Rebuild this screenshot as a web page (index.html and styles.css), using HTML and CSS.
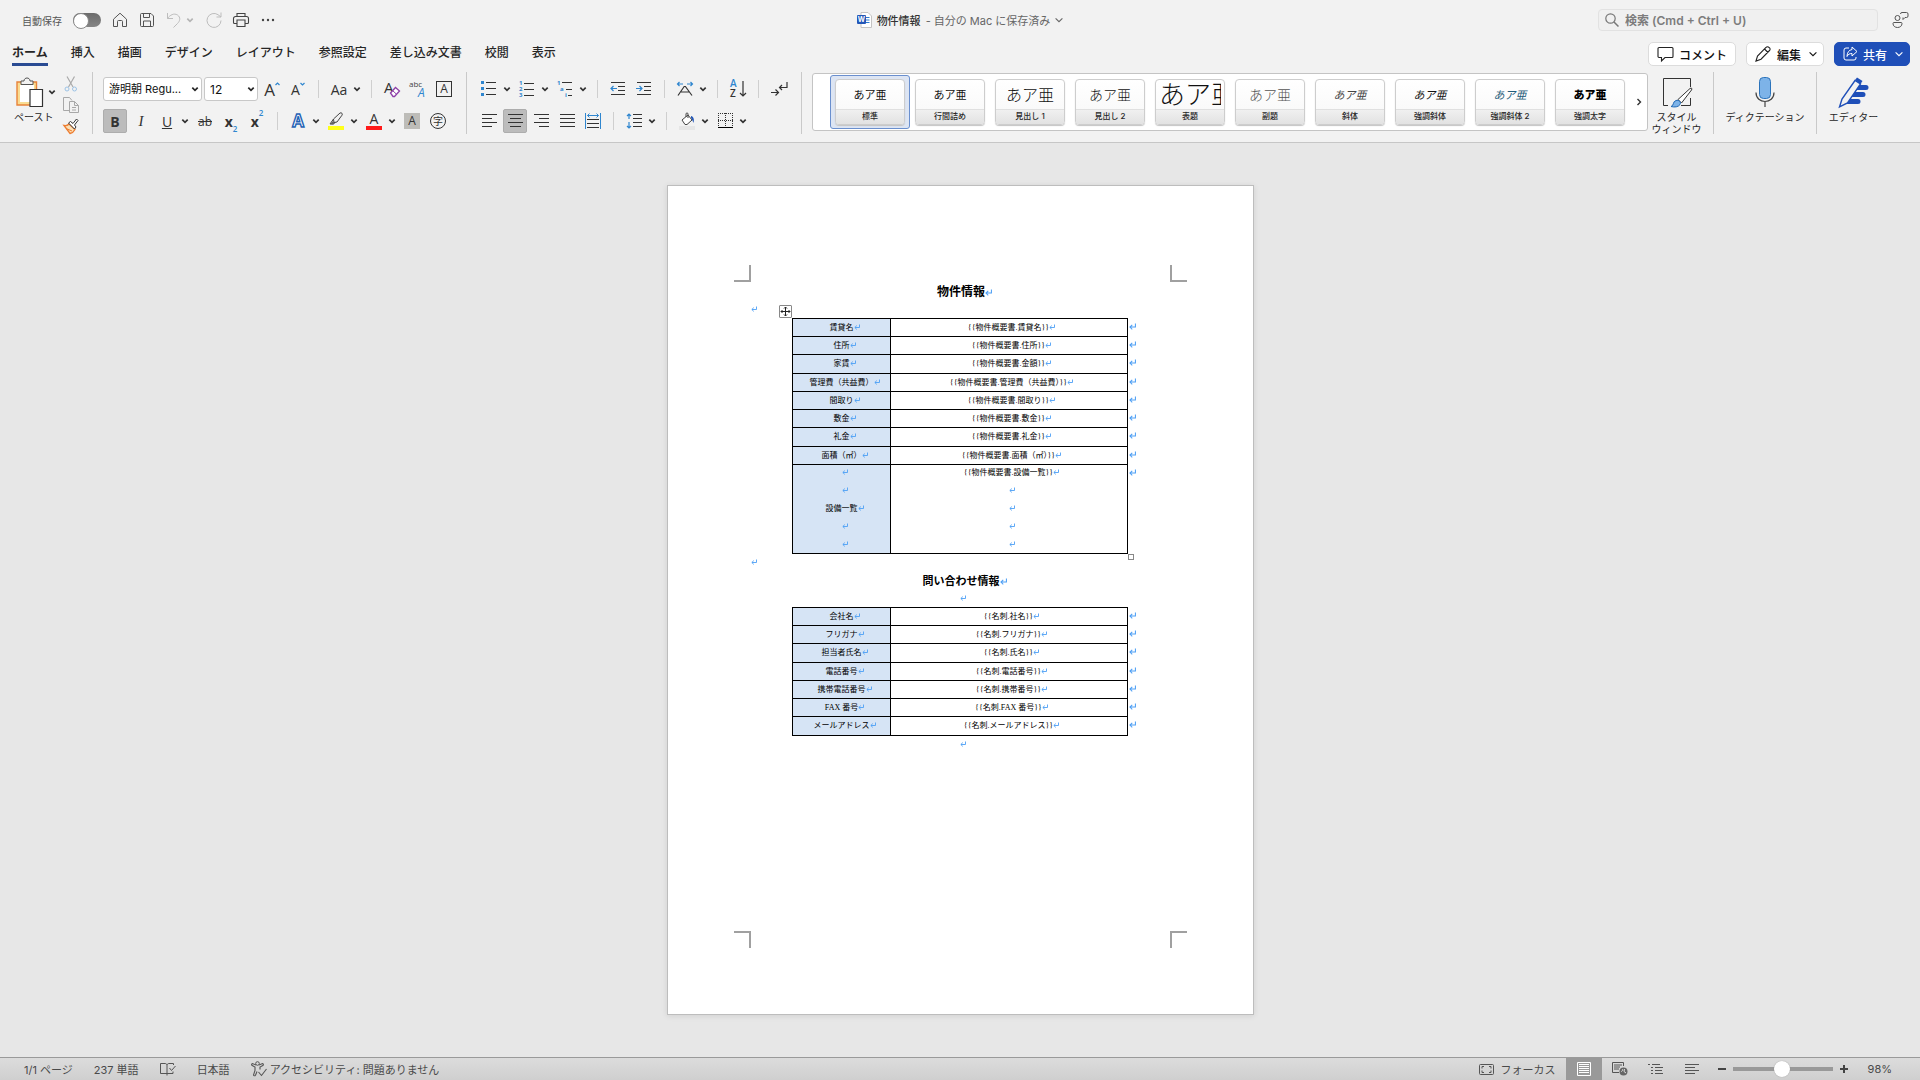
FILE: index.html
```html
<!DOCTYPE html>
<html lang="ja">
<head>
    <meta charset="UTF-8">
    <meta name="viewport" content="width=device-width, initial-scale=1.0">
    <title>物件情報</title>
    <link rel="stylesheet" href="styles.css">
</head>
<body>
    <svg class="defs" aria-hidden="true">
        <symbol id="chev" viewBox="0 0 8 8"><path d="M1.3 2.6 4 5.3 6.7 2.6" fill="none" stroke="currentColor" stroke-width="1.7"/></symbol>
        <symbol id="chev-thin" viewBox="0 0 8 8"><path d="M.6 2.3 4 5.7 7.4 2.3" fill="none" stroke="currentColor" stroke-width="1.1"/></symbol>
        <symbol id="ret" viewBox="0 0 6 6"><path d="M5.5.5v3H1M2.8 1.6.8 3.5l2 1.9" fill="none" stroke="#4d9ff5" stroke-width=".9"/></symbol>
    </svg>

    <header>
        <div class="titlebar">
            <div class="quick">
                <label for="autosave">自動保存</label>
                <input type="checkbox" id="autosave" class="switch">
                <button class="qb" aria-label="ホーム"><svg width="16" height="16" viewBox="0 0 16 16"><path d="M1.500 7.200 8 1.200l6.500 6v7.300h-4V9.500a1 1 0 0 0-1-1h-3a1 1 0 0 0-1 1v5h-4z" fill="none" stroke="#555" stroke-linejoin="round"/></svg></button>
                <button class="qb" aria-label="保存"><svg width="16" height="16" viewBox="0 0 16 16"><path d="M1.500 2.500a1 1 0 0 1 1-1h9.500l2.500 2.500v9.500a1 1 0 0 1-1 1h-11a1 1 0 0 1-1-1zM4.500 1.500v4h6v-4M4.500 14.500v-5.500h7v5.500" fill="none" stroke="#555"/></svg></button>
                <div class="split">
                    <button class="qb" aria-label="元に戻す"><svg width="16" height="16" viewBox="0 0 16 16"><path d="M1.500 1v5.500H7M1.500 6.500C4 3 8 .8 11.500 3c3.500 2.500 2.500 6 0 8.500l-4 4" fill="none" stroke="#bdbdbd"/></svg></button>
                    <button class="drop pale" aria-label="元に戻す履歴"><svg width="8" height="8"><use href="#chev"/></svg></button>
                </div>
                <button class="qb" aria-label="やり直し"><svg width="16" height="16" viewBox="0 0 16 16"><path d="M15 8.500A7 7 0 1 1 12 2.700L15 5M15 .5V5h-4.500" fill="none" stroke="#bdbdbd"/></svg></button>
                <button class="qb" aria-label="印刷"><svg width="16" height="16" viewBox="0 0 16 16"><path d="M4 4.500v-3h8v3M4 11.500H1.500a1 1 0 0 1-1-1v-4a2 2 0 0 1 2-2h11a2 2 0 0 1 2 2v4a1 1 0 0 1-1 1H12M4 8h8v6.500H4z" fill="none" stroke="#444" stroke-width="1.100"/></svg></button>
                <button class="qb" aria-label="その他"><svg width="14" height="4" viewBox="0 0 14 4" fill="#444"><circle cx="2" cy="2" r="1.200"/><circle cx="7" cy="2" r="1.200"/><circle cx="12" cy="2" r="1.200"/></svg></button>
            </div>
            <div class="doc-title">
                <svg width="15" height="16" viewBox="0 0 15 16"><path d="M4 .5h7l3.500 3.500v11.500H4z" fill="#fff" stroke="#c4c4c4"/><path d="M9 5.500h3.500M9 8h3.500M9 10.500h3.500" stroke="#2b7cd3"/><rect y="3" width="9" height="9" rx="1" fill="#2357b8"/><text x="4.500" y="10" class="word-w">W</text></svg>
                <b>物件情報</b><span>- 自分の Mac に保存済み</span>
                <svg width="8" height="8"><use href="#chev-thin"/></svg>
            </div>
            <div class="search-area">
                <label class="search">
                    <svg width="14" height="14" viewBox="0 0 14 14"><circle cx="5.500" cy="5.500" r="4.700" fill="none" stroke="#777" stroke-width="1.200"/><path d="m9 9 4.500 4.500" stroke="#777" stroke-width="1.500"/></svg>
                    <input type="text" placeholder="検索 (Cmd + Ctrl + U)" aria-label="検索">
                </label>
                <button class="qb" aria-label="共同作業"><svg width="18" height="18" viewBox="0 0 18 18" fill="none" stroke="#555"><path d="M9.500 3a1.500 1.500 0 0 1 1.500-1.500h4.500A1.500 1.500 0 0 1 17 3v2a1.500 1.500 0 0 1-1.500 1.500H14L12 8.500v-2"/><circle cx="6.500" cy="7" r="2.500"/><path d="M2 12.500a1 1 0 0 1 1-1h7a1 1 0 0 1 1 1c0 2.500-2 4-4.500 4S2 15 2 12.500z"/></svg></button>
            </div>
        </div>

        <div class="tabbar">
            <nav>
                <a href="#" class="active">ホーム</a>
                <a href="#">挿入</a>
                <a href="#">描画</a>
                <a href="#">デザイン</a>
                <a href="#">レイアウト</a>
                <a href="#">参照設定</a>
                <a href="#">差し込み文書</a>
                <a href="#">校閲</a>
                <a href="#">表示</a>
            </nav>
            <div class="actions">
                <button class="pill"><svg width="17" height="16" viewBox="0 0 17 16"><path d="M2 1.500h13a1 1 0 0 1 1 1v8a1 1 0 0 1-1 1H8L4.500 15v-3.500H2a1 1 0 0 1-1-1v-8a1 1 0 0 1 1-1z" fill="none" stroke="#222" stroke-width="1.100"/></svg>コメント</button>
                <button class="pill"><svg width="17" height="16" viewBox="0 0 17 16"><path d="m1 15 1.500-5L11 1.500a1.800 1.800 0 0 1 3 0 1.800 1.800 0 0 1 .5 3L6 13.200zM9.500 3l3.500 3.500" fill="none" stroke="#222" stroke-width="1.100"/></svg>編集<svg class="end" width="8" height="8"><use href="#chev-thin"/></svg></button>
                <button class="pill share"><svg width="15" height="16" viewBox="0 0 15 16"><path d="M6 2H3a2 2 0 0 0-2 2v8a2 2 0 0 0 2 2h8a2 2 0 0 0 2-2v-1M9 1l5 4.500L9 10V7.500c-2.500 0-4 .8-5 3 0-4 2-6.500 5-7z" fill="none" stroke="#fff"/></svg>共有<svg class="end" width="8" height="8"><use href="#chev-thin"/></svg></button>
            </div>
        </div>

        <div class="ribbon">
            <div class="group clipboard">
                <div class="paste">
                    <div class="paste-top">
                        <button class="ib" aria-label="貼り付け"><svg width="28" height="31" viewBox="0 0 28 31"><path d="M1 5h19.500v23H1z" fill="#f9dc92" stroke="#e8833a" stroke-width="1.400"/><path d="M4 8h14v17H4z" fill="#fff"/><path d="M5 7.500V4h3c0-4 6-4 6 0h3v3.500z" fill="#f2f2f2" stroke="#555"/><path d="M14 12.500h12.500v17H14z" fill="#fff" stroke="#333" stroke-width="1.200"/></svg></button>
                        <button class="drop" aria-label="貼り付けオプション"><svg width="8" height="8"><use href="#chev"/></svg></button>
                    </div>
                    <span>ペースト</span>
                </div>
                <div class="clip-tools">
                    <button class="ib" aria-label="切り取り"><svg width="16" height="16" viewBox="0 0 16 16" fill="none"><path d="m4 .5 6 10.500M11.500.5l-6 10.500" stroke="#aaa" stroke-width="1.200"/><circle cx="4" cy="13" r="2" stroke="#9cc3e6"/><circle cx="11.500" cy="13" r="2" stroke="#9cc3e6"/></svg></button>
                    <button class="ib" aria-label="コピー"><svg width="16" height="16" viewBox="0 0 16 16" fill="#f2f2f2" stroke="#a8a8a8"><path d="M7 13.500H.5V.5h6l2.500 3"/><path d="M6.500 4.500h5l4 4v7h-9zM11.500 4.500v4h4M9 10.500h4M9 13h4"/></svg></button>
                    <button class="ib" aria-label="書式のコピー"><svg width="16" height="16" viewBox="0 0 16 16" fill="none"><path d="M1 7.500c2 .5 3.500 0 5-1.500l6 5.500c-1 2-3 3.500-5 4z" fill="#fbe0b5" stroke="#ed7d31" stroke-width="1.300"/><path d="M3 10.500 9 13" stroke="#ed7d31"/><path d="m5.500 5 2-1.500L10 5.500l3.500-4.500L15 2.500 11.500 7l1.500 2-1.500 2z" fill="#fff" stroke="#333"/></svg></button>
                </div>
            </div>

            <div class="group font">
                <div class="row">
                    <label class="combo name"><select aria-label="フォント"><option>游明朝 Regu...</option></select><svg width="8" height="8"><use href="#chev"/></svg></label>
                    <label class="combo size"><select aria-label="フォント サイズ"><option>12</option></select><svg width="8" height="8"><use href="#chev"/></svg></label>
                    <button class="ib" aria-label="フォント サイズの拡大"><span class="big">A</span><svg class="caret" width="5" height="4" viewBox="0 0 5 4"><path d="m.5 3 2-2 2 2" fill="none" stroke="#2f86cf" stroke-width="1.200"/></svg></button>
                    <button class="ib" aria-label="フォント サイズの縮小"><span class="mid">A</span><svg class="caret" width="5" height="4" viewBox="0 0 5 4"><path d="m.5 1 2 2 2-2" fill="none" stroke="#2f86cf" stroke-width="1.200"/></svg></button>
                    <i class="sep"></i>
                    <button class="ib" aria-label="文字種の変換"><span class="mid">Aa</span></button>
                    <button class="drop" aria-label="文字種の選択"><svg width="8" height="8"><use href="#chev"/></svg></button>
                    <i class="sep"></i>
                    <button class="ib" aria-label="書式のクリア"><svg width="17" height="18" viewBox="0 0 17 18"><text x="0" y="13" class="ic-a">A</text><path d="m6.500 13 5-5.500 4 3.500-5 5.500h-1.500z" fill="#fff" stroke="#8e3fa8" stroke-width="1.300"/><path d="m8.500 10.500 4 3.700" stroke="#8e3fa8"/></svg></button>
                    <button class="ib" aria-label="ルビ"><svg width="18" height="18" viewBox="0 0 18 18"><text x="0" y="7" class="ic-abc">abc</text><text x="9" y="17" class="ic-ruby">A</text></svg></button>
                    <button class="ib" aria-label="囲み線"><span class="boxed">A</span></button>
                </div>
                <div class="row">
                    <button class="ib on" aria-label="太字"><b>B</b></button>
                    <button class="ib" aria-label="斜体"><em>I</em></button>
                    <button class="ib" aria-label="下線"><u>U</u></button>
                    <button class="drop" aria-label="下線の種類"><svg width="8" height="8"><use href="#chev"/></svg></button>
                    <button class="ib" aria-label="取り消し線"><s>ab</s></button>
                    <button class="ib script" aria-label="下付き"><b>x</b><sub>2</sub></button>
                    <button class="ib script" aria-label="上付き"><b>x</b><sup>2</sup></button>
                    <i class="sep"></i>
                    <button class="ib" aria-label="文字の効果"><svg width="18" height="18" viewBox="0 0 18 18"><text x="9" y="15" class="ic-effect">A</text></svg></button>
                    <button class="drop" aria-label="文字の効果の選択"><svg width="8" height="8"><use href="#chev"/></svg></button>
                    <button class="ib" aria-label="蛍光ペン"><svg width="16" height="18" viewBox="0 0 16 18"><path d="M0 14h16v4H0z" fill="#ffff1a"/><path d="m5.500 7 6.500-6c1.500-.8 3 .8 2 2.200L9 10l-3 .5zM5.500 7 2 12h3.500l1.500-1.500" fill="none" stroke="#444"/><path d="m2 12 3-3 1.500 2-1 1.500z" fill="#666"/></svg></button>
                    <button class="drop" aria-label="蛍光ペンの色"><svg width="8" height="8"><use href="#chev"/></svg></button>
                    <button class="ib" aria-label="フォントの色"><svg width="16" height="18" viewBox="0 0 16 18"><path d="M0 14h16v4H0z" fill="#ff1a1a"/><text x="8" y="12" class="ic-color">A</text></svg></button>
                    <button class="drop" aria-label="フォントの色の選択"><svg width="8" height="8"><use href="#chev"/></svg></button>
                    <button class="ib" aria-label="文字の網かけ"><span class="shaded">A</span></button>
                    <button class="ib" aria-label="囲い文字"><span class="circled">字</span></button>
                </div>
            </div>

            <div class="group para">
                <div class="row">
                    <button class="ib" aria-label="箇条書き"><svg width="16" height="16" viewBox="0 0 16 16"><path d="M0 0h3v3H0zM0 6h3v3H0zM0 12h3v3H0z" fill="#2f86cf"/><path d="M5 1.500h10M5 7.500h10M5 13.500h10" stroke="#333"/></svg></button>
                    <button class="drop" aria-label="行頭文字"><svg width="8" height="8"><use href="#chev"/></svg></button>
                    <button class="ib" aria-label="段落番号"><svg width="16" height="16" viewBox="0 0 16 16"><g class="ic-num"><text x="0" y="4">1</text><text x="0" y="10">2</text><text x="0" y="16">3</text></g><path d="M5 2.500h10M5 8.500h10M5 14.500h10" stroke="#333"/></svg></button>
                    <button class="drop" aria-label="番号の形式"><svg width="8" height="8"><use href="#chev"/></svg></button>
                    <button class="ib" aria-label="アウトライン"><svg width="16" height="16" viewBox="0 0 16 16"><g class="ic-num"><text x="0" y="4">1</text><text x="3" y="10">a</text><text x="8" y="16">i</text></g><path d="M5 1.500h10M9 8.500h6M11 14.500h4" stroke="#333"/></svg></button>
                    <button class="drop" aria-label="リストの種類"><svg width="8" height="8"><use href="#chev"/></svg></button>
                    <i class="sep"></i>
                    <button class="ib" aria-label="インデントを減らす"><svg width="16" height="14" viewBox="0 0 16 14"><path d="M1 .5h14M8 4.500h7M8 8.500h7M1 12.500h14" stroke="#333"/><path d="M7 6.500H1M3.500 4 1 6.500 3.500 9" fill="none" stroke="#2f86cf" stroke-width="1.200"/></svg></button>
                    <button class="ib" aria-label="インデントを増やす"><svg width="16" height="14" viewBox="0 0 16 14"><path d="M1 .5h14M8 4.500h7M8 8.500h7M1 12.500h14" stroke="#333"/><path d="M0 6.500h6M3.500 4 6 6.500 3.500 9" fill="none" stroke="#2f86cf" stroke-width="1.200"/></svg></button>
                    <i class="sep"></i>
                    <button class="ib" aria-label="拡張書式"><svg width="16" height="16" viewBox="0 0 16 16" fill="none"><path d="M.5 3H6M2.500 1 .5 3l2 2M15.500 3H10M13.500 1l2 2-2 2" stroke="#2f86cf" stroke-width="1.200"/><path d="m1 14.500 6.200-9h1.200l6.600 9M4 11h8" stroke="#333" stroke-width="1.200"/></svg></button>
                    <button class="drop" aria-label="拡張書式の選択"><svg width="8" height="8"><use href="#chev"/></svg></button>
                    <i class="sep"></i>
                    <button class="ib" aria-label="並べ替え"><svg width="17" height="18" viewBox="0 0 17 18"><text x="0" y="7" class="ic-sort blue">A</text><text x="0" y="17" class="ic-sort">Z</text><path d="M13 1v15M10 13l3 3 3-3" fill="none" stroke="#333" stroke-width="1.200"/></svg></button>
                    <i class="sep"></i>
                    <button class="ib" aria-label="編集記号の表示"><svg width="17" height="16" viewBox="0 0 17 16"><path d="M16 1v5.500H8.500M11 4 8.500 6.500 11 9M0 11.500h7.500M4.500 8.500l3 3-3 3" fill="none" stroke="#333" stroke-width="1.200"/></svg></button>
                </div>
                <div class="row">
                    <button class="ib" aria-label="左揃え"><svg width="15" height="14" viewBox="0 0 15 14"><path d="M0 .5h15M0 4.500h10M0 8.500h15M0 12.500h10" stroke="#333"/></svg></button>
                    <button class="ib on" aria-label="中央揃え"><svg width="15" height="14" viewBox="0 0 15 14"><path d="M0 .5h15M2 4.500h11M0 8.500h15M2 12.500h11" stroke="#333"/></svg></button>
                    <button class="ib" aria-label="右揃え"><svg width="15" height="14" viewBox="0 0 15 14"><path d="M0 .5h15M5 4.500h10M0 8.500h15M5 12.500h10" stroke="#333"/></svg></button>
                    <button class="ib" aria-label="両端揃え"><svg width="15" height="14" viewBox="0 0 15 14"><path d="M0 .5h15M0 4.500h15M0 8.500h15M0 12.500h15" stroke="#333"/></svg></button>
                    <button class="ib" aria-label="均等割り付け"><svg width="16" height="16" viewBox="0 0 16 16" fill="none"><path d="M.5 0v16M15.500 0v16" stroke="#2f86cf"/><path d="M2.500 2.500h11M4.500.5l-2 2 2 2M11.500.5l2 2-2 2" stroke="#2f86cf"/><path d="M2 6.500h12M2 10.500h12M2 14.500h12" stroke="#333"/></svg></button>
                    <i class="sep"></i>
                    <button class="ib" aria-label="行間"><svg width="17" height="16" viewBox="0 0 17 16"><path d="M3 1v5M1 3l2-2 2 2M3 9v6M1 13l2 2 2-2" fill="none" stroke="#2f86cf" stroke-width="1.200"/><path d="M7 1.500h9M7 5.500h9M7 9.500h9M7 13.500h9" stroke="#333"/></svg></button>
                    <button class="drop" aria-label="行間の選択"><svg width="8" height="8"><use href="#chev"/></svg></button>
                    <i class="sep"></i>
                    <button class="ib" aria-label="塗りつぶし"><svg width="16" height="18" viewBox="0 0 16 18"><path d="M0 14h16v4H0z" fill="#e6e6e6"/><path d="m3 8 6-5 4 5-5 4.500H6zM9 6V2c0-1.500-2-1.500-2 0v3" fill="#fff" stroke="#444"/><path d="M12 4c2.500.5 3.500 3 2.500 7-.8-2-1.500-4-2.500-5z" fill="#2357b8"/></svg></button>
                    <button class="drop" aria-label="塗りつぶしの色"><svg width="8" height="8"><use href="#chev"/></svg></button>
                    <button class="ib" aria-label="罫線"><svg width="15" height="16" viewBox="0 0 15 16"><path d="M0 .5h15M0 7.500h15M.5 0v14M7.500 0v14M14.500 0v14" stroke="#333" stroke-dasharray="1 1"/><path d="M0 14.500h15" stroke="#000"/></svg></button>
                    <button class="drop" aria-label="罫線の種類"><svg width="8" height="8"><use href="#chev"/></svg></button>
                </div>
            </div>

            <div class="styles">
                <button class="style selected"><span class="card"><span class="sample">あア亜</span><span class="cap">標準</span></span></button>
                <button class="style"><span class="card"><span class="sample">あア亜</span><span class="cap">行間詰め</span></span></button>
                <button class="style"><span class="card"><span class="sample h1s">あア亜</span><span class="cap">見出し 1</span></span></button>
                <button class="style"><span class="card"><span class="sample h2s">あア亜</span><span class="cap">見出し 2</span></span></button>
                <button class="style"><span class="card"><span class="sample title">あア亜</span><span class="cap">表題</span></span></button>
                <button class="style"><span class="card"><span class="sample subtitle">あア亜</span><span class="cap">副題</span></span></button>
                <button class="style"><span class="card"><span class="sample italic soft">あア亜</span><span class="cap">斜体</span></span></button>
                <button class="style"><span class="card"><span class="sample italic">あア亜</span><span class="cap">強調斜体</span></span></button>
                <button class="style"><span class="card"><span class="sample italic teal">あア亜</span><span class="cap">強調斜体 2</span></span></button>
                <button class="style"><span class="card"><span class="sample bold">あア亜</span><span class="cap">強調太字</span></span></button>
                <button class="more" aria-label="次のスタイル"><svg width="6" height="8" viewBox="0 0 6 8"><path d="m1.500 1 3 3-3 3" fill="none" stroke="#333" stroke-width="1.400"/></svg></button>
            </div>

            <button class="large pane"><svg width="30" height="31" viewBox="0 0 30 31"><path d="M6 28.500H1.500v-27h27V10M28.500 21v7.500H19" fill="none" stroke="#333"/><path d="M16 22.500 28 11.500c1.500-1 2.500 0 1.500 1.500L19.500 26z" fill="#fff" stroke="#333"/><path d="M9 29.500c3-.5 1.500-5 5-6 3-.8 5.500 1.500 4 4s-5.500 3-9 2z" fill="#7db3e8" stroke="#1f68b4"/></svg><span>スタイル<br>ウィンドウ</span></button>
            <button class="large dictate"><svg width="20" height="31" viewBox="0 0 20 31"><rect x="4.500" y=".5" width="11" height="21" rx="4" fill="#7db3e8" stroke="#2b73bb"/><path d="M1 15.500c0 12 18 12 18 0M10 24.500V30" fill="none" stroke="#444" stroke-width="1.200"/></svg><span>ディクテーション</span></button>
            <button class="large editor"><svg width="31" height="31" viewBox="0 0 31 31"><path d="M20 8h8a2.500 2.500 0 0 1 0 5H17zM16 15h9a2.500 2.500 0 0 1 0 5H13zM12 22h8a2.500 2.500 0 0 1 0 5H8z" fill="#1f4fb8"/><path d="M1.500 30 4 22 17 3.500 22.500 7 9.500 26z" fill="#f2f2f2" stroke="#1f4fb8" stroke-width="1.400"/><path d="m17 3 2-2.500 5.500 3.500-2 3z" fill="#1f4fb8"/></svg><span>エディター</span></button>
        </div>
    </header>

    <main>
        <article class="page">
            <i class="crop tl"></i><i class="crop tr"></i><i class="crop bl"></i><i class="crop br"></i>
            <h1>物件情報<svg class="ret"><use href="#ret"/></svg></h1>
            <p><svg class="ret"><use href="#ret"/></svg></p>
            <div class="table-box">
                <i class="move"><svg width="11" height="11" viewBox="0 0 11 11"><path d="M5.500 1v9M1 5.500h9M4 2.500 5.500 1 7 2.500M4 8.500 5.500 10 7 8.500M2.500 4 1 5.500 2.500 7M8.500 4 10 5.500 8.500 7" fill="none" stroke="#222"/></svg></i>
                <table>
                    <tr><th>賃貸名<svg class="ret"><use href="#ret"/></svg></th><td>{{物件概要書.賃貸名}}<svg class="ret"><use href="#ret"/></svg></td><td class="end"><svg class="ret"><use href="#ret"/></svg></td></tr>
                    <tr><th>住所<svg class="ret"><use href="#ret"/></svg></th><td>{{物件概要書.住所}}<svg class="ret"><use href="#ret"/></svg></td><td class="end"><svg class="ret"><use href="#ret"/></svg></td></tr>
                    <tr><th>家賃<svg class="ret"><use href="#ret"/></svg></th><td>{{物件概要書.金額}}<svg class="ret"><use href="#ret"/></svg></td><td class="end"><svg class="ret"><use href="#ret"/></svg></td></tr>
                    <tr><th>管理費（共益費）<svg class="ret"><use href="#ret"/></svg></th><td>{{物件概要書.管理費（共益費）}}<svg class="ret"><use href="#ret"/></svg></td><td class="end"><svg class="ret"><use href="#ret"/></svg></td></tr>
                    <tr><th>間取り<svg class="ret"><use href="#ret"/></svg></th><td>{{物件概要書.間取り}}<svg class="ret"><use href="#ret"/></svg></td><td class="end"><svg class="ret"><use href="#ret"/></svg></td></tr>
                    <tr><th>敷金<svg class="ret"><use href="#ret"/></svg></th><td>{{物件概要書.敷金}}<svg class="ret"><use href="#ret"/></svg></td><td class="end"><svg class="ret"><use href="#ret"/></svg></td></tr>
                    <tr><th>礼金<svg class="ret"><use href="#ret"/></svg></th><td>{{物件概要書.礼金}}<svg class="ret"><use href="#ret"/></svg></td><td class="end"><svg class="ret"><use href="#ret"/></svg></td></tr>
                    <tr><th>面積（㎡）<svg class="ret"><use href="#ret"/></svg></th><td>{{物件概要書.面積（㎡）}}<svg class="ret"><use href="#ret"/></svg></td><td class="end"><svg class="ret"><use href="#ret"/></svg></td></tr>
                    <tr>
                        <th>
                            <div class="lines">
                                <div><svg class="ret"><use href="#ret"/></svg></div>
                                <div><svg class="ret"><use href="#ret"/></svg></div>
                                <div>設備一覧<svg class="ret"><use href="#ret"/></svg></div>
                                <div><svg class="ret"><use href="#ret"/></svg></div>
                                <div><svg class="ret"><use href="#ret"/></svg></div>
                            </div>
                        </th>
                        <td>
                            <div class="lines">
                                <div>{{物件概要書.設備一覧}}<svg class="ret"><use href="#ret"/></svg></div>
                                <div><svg class="ret"><use href="#ret"/></svg></div>
                                <div><svg class="ret"><use href="#ret"/></svg></div>
                                <div><svg class="ret"><use href="#ret"/></svg></div>
                                <div><svg class="ret"><use href="#ret"/></svg></div>
                            </div>
                        </td>
                        <td class="end"><svg class="ret"><use href="#ret"/></svg></td>
                    </tr>
                </table>
                <i class="resize"></i>
            </div>
            <p><svg class="ret"><use href="#ret"/></svg></p>
            <h2>問い合わせ情報<svg class="ret"><use href="#ret"/></svg></h2>
            <p class="center"><svg class="ret"><use href="#ret"/></svg></p>
            <div class="table-box">
                <table>
                    <tr><th>会社名<svg class="ret"><use href="#ret"/></svg></th><td>{{名刺.社名}}<svg class="ret"><use href="#ret"/></svg></td><td class="end"><svg class="ret"><use href="#ret"/></svg></td></tr>
                    <tr><th>フリガナ<svg class="ret"><use href="#ret"/></svg></th><td>{{名刺.フリガナ}}<svg class="ret"><use href="#ret"/></svg></td><td class="end"><svg class="ret"><use href="#ret"/></svg></td></tr>
                    <tr><th>担当者氏名<svg class="ret"><use href="#ret"/></svg></th><td>{{名刺.氏名}}<svg class="ret"><use href="#ret"/></svg></td><td class="end"><svg class="ret"><use href="#ret"/></svg></td></tr>
                    <tr><th>電話番号<svg class="ret"><use href="#ret"/></svg></th><td>{{名刺.電話番号}}<svg class="ret"><use href="#ret"/></svg></td><td class="end"><svg class="ret"><use href="#ret"/></svg></td></tr>
                    <tr><th>携帯電話番号<svg class="ret"><use href="#ret"/></svg></th><td>{{名刺.携帯番号}}<svg class="ret"><use href="#ret"/></svg></td><td class="end"><svg class="ret"><use href="#ret"/></svg></td></tr>
                    <tr><th>FAX 番号<svg class="ret"><use href="#ret"/></svg></th><td>{{名刺.FAX 番号}}<svg class="ret"><use href="#ret"/></svg></td><td class="end"><svg class="ret"><use href="#ret"/></svg></td></tr>
                    <tr><th>メールアドレス<svg class="ret"><use href="#ret"/></svg></th><td>{{名刺.メールアドレス}}<svg class="ret"><use href="#ret"/></svg></td><td class="end"><svg class="ret"><use href="#ret"/></svg></td></tr>
                </table>
            </div>
            <p class="center"><svg class="ret"><use href="#ret"/></svg></p>
        </article>
    </main>

    <footer>
        <div class="status">
            <span>1/1 ページ</span>
            <span>237 単語</span>
            <button class="sb" aria-label="文章校正"><svg width="16" height="14" viewBox="0 0 16 14"><path d="M7 11.500H.5V1.500H5c1 0 2 .5 2 1.500v10.500M7 3c0-1 1-1.500 2-1.500h4.500V3M7 11.500h6V9.500M9.500 6l2 2.500L15.500 4" fill="none" stroke="#555"/></svg></button>
            <span>日本語</span>
            <button class="sb access"><svg width="16" height="16" viewBox="0 0 16 16"><circle cx="6.500" cy="2.500" r="1.800" fill="none" stroke="#555"/><path d="M5 4 1.500 2.500c-1 .3-1.200 1.500-.3 2L4 6v3.500L2.500 14c.2 1 1.500 1 2 .2L6 10.500M8 4l3.500-1.500c1 .3 1.200 1.500.3 2L9 6v2.500M7.500 11l3 3.500L15.500 8" fill="none" stroke="#555" stroke-width="1.100"/></svg>アクセシビリティ: 問題ありません</button>
        </div>
        <div class="views">
            <button class="sb focus"><svg width="15" height="11" viewBox="0 0 15 11"><rect x=".5" y=".5" width="14" height="10" rx="1" fill="none" stroke="#555"/><path d="M3 4.500v-2h2M10 2.500h2v2M12 6.500v2h-2M5 8.500H3v-2" fill="none" stroke="#555"/></svg>フォーカス</button>
            <button class="view active" aria-label="印刷レイアウト"><svg width="14" height="14" viewBox="0 0 14 14"><path d="M.5.500h13v13H.5zM2 2.500h10M2 4.500h10M2 6.500h10M2 8.500h10M2 10.500h10" fill="none" stroke="#fff"/></svg></button>
            <button class="view" aria-label="Web レイアウト"><svg width="16" height="14" viewBox="0 0 16 14"><path d="M7 10.500H.5V.5h11V4M2 3h8M2 5h6M2 7h5" fill="none" stroke="#555"/><circle cx="11.500" cy="9.500" r="4" fill="#666"/><path d="M10 7.500c2 0 0 2-1 2M12.500 7l-.5 2.500 2 1.500" fill="none" stroke="#ddd"/></svg></button>
            <button class="view" aria-label="アウトライン表示"><svg width="15" height="11" viewBox="0 0 15 11"><path d="M0 .5h2M4 .5h8M3 3.500h2M7 3.500h8M3 6.500h2M7 6.500h7M3 9.500h2M7 9.500h8" stroke="#555"/></svg></button>
            <button class="view" aria-label="下書き"><svg width="14" height="11" viewBox="0 0 14 11"><path d="M0 .5h14M0 3.500h10M0 6.500h14M0 9.500h10" stroke="#555"/></svg></button>
            <div class="zoom">
                <button class="sb" aria-label="縮小"><svg width="8" height="8" viewBox="0 0 8 8"><path d="M0 4h8" stroke="#444" stroke-width="2"/></svg></button>
                <input type="range" min="0" max="196" value="97" aria-label="ズーム">
                <button class="sb" aria-label="拡大"><svg width="8" height="8" viewBox="0 0 8 8"><path d="M0 4h8M4 0v8" stroke="#444" stroke-width="2"/></svg></button>
            </div>
            <span>98%</span>
        </div>
    </footer>
</body>
</html>
```
FILE: styles.css
```css
* {
    box-sizing: border-box;
}
body {
    margin: 0;
    min-height: 100vh;
    display: flex;
    flex-direction: column;
    background-color: #e7e7e7;
    color: #262626;
    font-family: Inter, "Noto Sans CJK JP", sans-serif;
    font-size: 11px;
}
button {
    display: flex;
    align-items: center;
    justify-content: center;
    padding: 0;
    border: none;
    background: none;
    color: inherit;
    font: inherit;
    white-space: nowrap;
}
svg {
    display: block;
    flex: none;
    overflow: visible;
}
.defs {
    position: absolute;
    width: 0;
    height: 0;
}
header {
    background-color: #f2f2f2;
    border-bottom: 1px solid #c6c6c6;
}

/* title bar */
.titlebar {
    display: grid;
    grid-template-columns: 1fr auto 1fr;
    align-items: center;
    height: 40px;
    padding: 0 11px;
}
.quick {
    display: flex;
    align-items: center;
    gap: 11px;
    padding-left: 11px;
    font-size: 10px;
    color: #555;
}
.switch {
    appearance: none;
    width: 28px;
    height: 14px;
    margin: 0;
    border-radius: 7px;
    background: linear-gradient(#6c6c6c, #858585);
}
.switch::before {
    content: "";
    display: block;
    width: 14px;
    height: 14px;
    border-radius: 50%;
    border: 1px solid #8a8a8a;
    background-color: #fff;
}
.qb {
    min-width: 16px;
    height: 18px;
}
.split {
    display: flex;
    align-items: center;
    gap: 4px;
    width: 29px;
}
.doc-title {
    display: flex;
    align-items: center;
    gap: 5px;
    color: #666;
}
.doc-title b {
    color: #333;
    font-weight: 500;
}
.word-w {
    font: bold 7px Inter, sans-serif;
    fill: #fff;
    text-anchor: middle;
}
.search-area {
    display: flex;
    align-items: center;
    justify-content: flex-end;
    gap: 13px;
}
.search {
    display: flex;
    align-items: center;
    gap: 6px;
    width: 280px;
    height: 22px;
    padding-left: 6px;
    border: 1px solid #e2e2e2;
    border-radius: 4px;
    background-color: #f0f0f0;
}
.search input {
    flex: 1;
    min-width: 0;
    padding: 0;
    border: none;
    background: none;
    font: 600 12px Inter, "Noto Sans CJK JP", sans-serif;
}
.search input::placeholder {
    color: #7c7c7c;
}

/* tabs */
.tabbar {
    display: flex;
    justify-content: space-between;
    height: 26px;
    padding: 0 10px 0 12px;
    font-size: 12px;
    font-weight: 500;
}
.tabbar nav {
    display: flex;
    gap: 23px;
}
.tabbar nav a {
    height: 26px;
    line-height: 25px;
    color: #262626;
    text-decoration: none;
    white-space: nowrap;
}
.tabbar nav .active {
    border-bottom: 3px solid #2a4b93;
    font-weight: 700;
}
.actions {
    display: flex;
    gap: 10px;
    padding-top: 2px;
}
.pill {
    height: 24px;
    gap: 5px;
    padding: 0 8px;
    border: 1px solid #dcdcdc;
    border-radius: 5px;
    background-color: #fff;
    color: #111;
}
.pill .end {
    margin: 0 -2px 0 3px;
}
.share {
    border-color: #1f4fb8;
    background-color: #1f4fb8;
    color: #fff;
}

/* ribbon */
.ribbon {
    display: flex;
    padding: 6px 0 8px;
}
.group {
    display: flex;
    flex-direction: column;
    gap: 8px;
    height: 62px;
    padding: 5px 10px 0;
    border-right: 1px solid #c9c9c9;
}
.clipboard {
    flex-direction: row;
    gap: 0;
    width: 93px;
    padding: 4px 0 0 14px;
}
.paste {
    width: 49px;
    font-size: 10px;
}
.paste-top {
    display: flex;
    align-items: center;
    gap: 4px;
    padding-left: 2px;
    margin-bottom: 1px;
}
.paste-top .ib {
    width: 28px;
    height: 32px;
}
.clip-tools {
    display: flex;
    flex-direction: column;
    gap: 5px;
}
.clip-tools .ib {
    width: 16px;
    height: 16px;
}
.font {
    width: 374px;
}
.para {
    width: 335px;
}
.row {
    display: flex;
    align-items: center;
    gap: 2px;
    height: 24px;
}
.ib {
    flex: none;
    width: 24px;
    height: 24px;
    border-radius: 2px;
    color: #333;
    font-family: "Open Sans", sans-serif;
    font-size: 14px;
}
.on {
    border: 1px solid #adadad;
    background-color: #bcbcbc;
}
.drop {
    flex: none;
    width: 10px;
    height: 24px;
    justify-content: flex-start;
    color: #333;
}
.pale {
    color: #b5b5b5;
}
.sep {
    flex: none;
    width: 13px;
    height: 18px;
    background: linear-gradient(#cfcfcf, #cfcfcf) center / 1px 100% no-repeat;
}
.combo {
    position: relative;
    height: 24px;
}
.combo select {
    appearance: none;
    width: 100%;
    height: 24px;
    padding: 0 12px 0 5px;
    border: 1px solid #c8c8c8;
    border-radius: 3px;
    background-color: #fff;
    color: #111;
    font: 12px Inter, "Noto Sans CJK JP", sans-serif;
}
.combo svg {
    position: absolute;
    top: 8px;
    right: 3px;
}
.name {
    width: 99px;
}
.combo.name select {
    font-size: 11px;
}
.size {
    width: 54px;
}
.caret {
    align-self: flex-start;
    margin-top: 5px;
}
.big {
    font-size: 17px;
}
.mid {
    font-size: 14px;
}
.boxed {
    width: 16px;
    height: 16px;
    border: 1px solid #333;
    font-size: 12px;
    line-height: 14px;
}
.shaded {
    width: 16px;
    height: 16px;
    background-color: #bdbcb8;
    font-size: 12px;
    line-height: 16px;
}
.circled {
    width: 16px;
    height: 16px;
    border: 1px solid #333;
    border-radius: 50%;
    font: 10px/14px "Noto Sans CJK JP", sans-serif;
}
.ib em {
    font-family: "Liberation Serif", serif;
    font-size: 15px;
}
.ib s {
    font-size: 12px;
}
.script sub, .script sup {
    color: #2f86cf;
    font-size: 8px;
    font-weight: 600;
    line-height: 8px;
}
.script sub {
    align-self: flex-end;
}
.script sup {
    align-self: flex-start;
}
.ic-a {
    font: 15px "Open Sans", sans-serif;
    fill: #333;
}
.ic-abc {
    font: 8px "Open Sans", sans-serif;
    fill: #444;
}
.ic-ruby {
    font: italic 12px "Open Sans", sans-serif;
    fill: #2f86cf;
}
.ic-effect {
    font: bold 17px "Open Sans", sans-serif;
    fill: #fff;
    stroke: #1f62b5;
    stroke-width: 1.4px;
    text-anchor: middle;
}
.ic-color {
    font: 14px "Open Sans", sans-serif;
    fill: #333;
    text-anchor: middle;
}
.ic-num {
    font: bold 6px "Open Sans", sans-serif;
    fill: #2f86cf;
}
.ic-sort {
    font: 600 10px "Open Sans", sans-serif;
    fill: #333;
}
.blue {
    fill: #2f86cf;
}

/* style gallery */
.styles {
    flex: 1;
    display: flex;
    align-items: center;
    min-width: 0;
    height: 58px;
    margin: 1px 0 0 10px;
    padding-left: 17px;
    border: 1px solid #c4c4c4;
    border-radius: 3px;
    background-color: #fff;
    overflow: hidden;
}
.style {
    flex: none;
    width: 80px;
    height: 54px;
    border: 1px solid transparent;
    border-radius: 3px;
}
.selected {
    border-color: #6a8fce;
    background-color: #dde5f3;
}
.card {
    display: flex;
    flex-direction: column;
    width: 70px;
    height: 46px;
    border: 1px solid #cdcdcd;
    border-radius: 4px;
    background: linear-gradient(#fff, #f7f7f7);
    box-shadow: 0 1px 1px #c4c4c4;
    overflow: hidden;
}
.sample {
    display: flex;
    flex: 1;
    align-items: center;
    justify-content: center;
    min-height: 0;
    margin: 0 3px;
    color: #111;
    font-size: 11px;
    line-height: 28px;
    overflow: hidden;
}
.cap {
    height: 15px;
    border-top: 1px solid #e0e0e0;
    background: linear-gradient(#f0f0f0, #e2e2e2);
    font-size: 8px;
    font-weight: 500;
    line-height: 13px;
}
.h1s {
    font-size: 16px;
    font-weight: 300;
}
.h2s, .subtitle {
    font-size: 14px;
    font-weight: 300;
}
.title {
    justify-content: flex-start;
    font-size: 26px;
    font-weight: 300;
}
.subtitle {
    color: #555;
}
.italic {
    font-style: italic;
}
.soft {
    color: #444;
}
.teal {
    color: #1f5c7a;
}
.bold {
    color: #000;
    font-weight: 900;
}
.more {
    flex: none;
    width: 18px;
    height: 54px;
}
.large {
    flex-direction: column;
    justify-content: flex-start;
    gap: 3px;
    height: 62px;
    padding-top: 5px;
    border-right: 1px solid #c9c9c9;
    font-size: 10px;
    line-height: 12px;
}
.pane {
    width: 66px;
    padding-right: 8px;
}
.dictate {
    width: 103px;
}
.editor {
    width: 103px;
    padding-right: 30px;
    border-right: none;
}

/* document */
main {
    flex: 1;
    padding: 42px 0;
}
.page {
    position: relative;
    width: 587px;
    min-height: 830px;
    margin: 0 auto;
    padding: 96px 83px;
    border: 1px solid #bdbdbd;
    background-color: #fff;
    box-shadow: 0 1px 6px rgba(0, 0, 0, 0.1);
    color: #000;
    font-family: "Liberation Serif", "Noto Sans CJK JP", serif;
    font-size: 8px;
}
.crop {
    position: absolute;
    width: 17px;
    height: 17px;
    border: 0 solid #a0a0a0;
}
.tl {
    top: 79px;
    left: 66px;
    border-width: 0 2px 2px 0;
}
.tr {
    top: 79px;
    right: 66px;
    border-width: 0 0 2px 2px;
}
.bl {
    bottom: 66px;
    left: 66px;
    border-width: 2px 2px 0 0;
}
.br {
    bottom: 66px;
    right: 66px;
    border-width: 2px 0 0 2px;
}
.page h1, .page h2 {
    margin: 0;
    padding: 1px 0 0 2px;
    font-size: 12px;
    line-height: 18px;
    text-align: center;
}
.page h2 {
    font-size: 11px;
}
.page p {
    height: 17px;
    margin: 0;
    line-height: 17px;
}
.page .center {
    text-align: center;
}
/* paragraph marks hang after the text and take no width */
.ret {
    display: inline-block;
    width: 6px;
    height: 6px;
    margin-right: -6px;
}
.page h1 .ret, .page h2 .ret {
    width: 7px;
    height: 7px;
    margin-right: -7px;
}
.table-box {
    position: relative;
    width: 349px;
    margin-left: 41px;
}
.page table {
    width: 349px;
    border-collapse: collapse;
    table-layout: fixed;
}
.page tr {
    height: 18px;
}
.page tr:nth-child(4n+3) {
    height: 19px;
}
.page th, .page td {
    padding: 0;
    border: 1px solid #000;
    font-weight: normal;
    line-height: 16px;
    text-align: center;
    white-space: nowrap;
}
.page th {
    width: 98px;
    padding-left: 1px;
    background-color: #d6e4f5;
}
.page td.end {
    width: 13px;
    padding-left: 1px;
    border: none;
    text-align: left;
    line-height: 18px;
    vertical-align: top;
}
.end .ret {
    width: 7px;
    height: 7px;
    margin-right: -7px;
}
.lines {
    display: flex;
    flex-direction: column;
    justify-content: space-between;
    height: 88px;
}
.move {
    position: absolute;
    top: -13px;
    left: -13px;
    width: 13px;
    height: 13px;
    border: 1px solid #888;
    border-radius: 1px;
}
.resize {
    position: absolute;
    right: 7px;
    bottom: -6px;
    width: 6px;
    height: 6px;
    border: 1px solid #888;
    background-color: #fff;
}

/* status bar */
footer {
    display: flex;
    justify-content: space-between;
    height: 23px;
    border-top: 1px solid #9a9a9a;
    background: linear-gradient(#dcdcdc, #cfcfcf);
    color: #4a4a4a;
}
.status {
    display: flex;
    align-items: center;
    gap: 21px;
    padding-left: 24px;
}
.access {
    gap: 3px;
}
.views {
    display: flex;
    align-items: center;
    padding-right: 28px;
}
.focus {
    gap: 7px;
    margin-right: 10px;
}
.view {
    width: 36px;
    height: 22px;
}
.view.active {
    background-color: #999;
}
.zoom {
    display: flex;
    align-items: center;
    gap: 7px;
    margin: 0 20px 0 8px;
}
.zoom input {
    appearance: none;
    width: 100px;
    height: 16px;
    margin: 0;
    background: linear-gradient(#999, #999) center / 100% 4px no-repeat;
}
.zoom input::-webkit-slider-thumb {
    appearance: none;
    width: 16px;
    height: 16px;
    border-radius: 50%;
    background-color: #fff;
    box-shadow: 0 0 1px #888;
}
```
